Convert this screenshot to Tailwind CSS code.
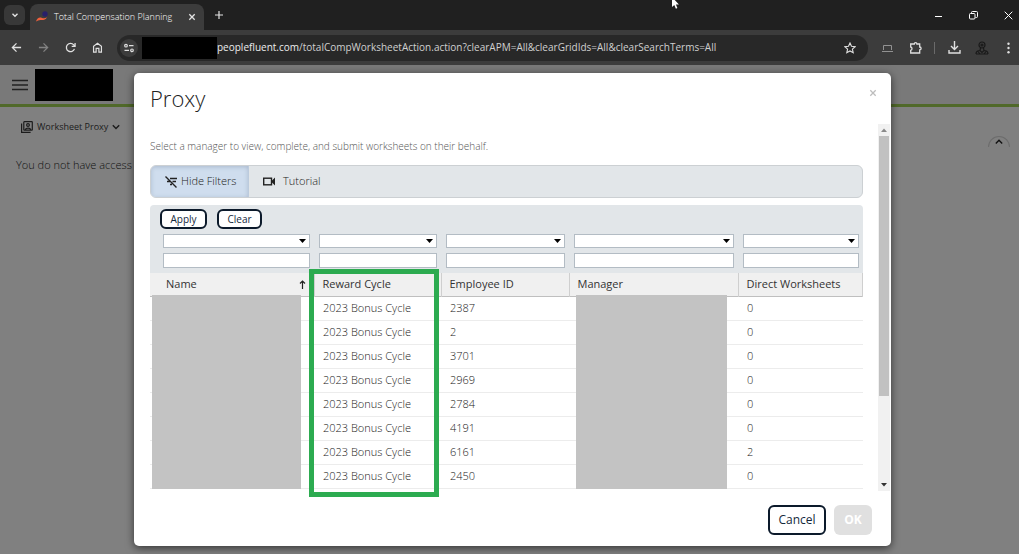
<!DOCTYPE html>
<html lang="en">
<head>
  <title>Total Compensation Planning</title>
  <meta charset="UTF-8">
  <meta name="viewport" content="width=device-width, initial-scale=1.0">
  <script src="https://cdn.jsdelivr.net/npm/@tailwindcss/browser@4"></script>
</head>
<body class="min-h-screen flex flex-col overflow-hidden bg-[#808080] font-['Open_Sans',sans-serif] text-[#333]">
  <!-- Tab strip -->
  <div class="relative flex h-[30px] items-end bg-[#202020] text-[#e3e3e3]">
    <button aria-label="Search tabs" class="mb-[5px] ml-1 flex h-5 w-[21px] items-center justify-center rounded-md bg-[#383838]">
      <svg class="h-2 w-2" viewBox="0 0 8 8" fill="none" stroke="currentColor" stroke-width="1.4"><path d="M1.5 2.800L4 5.300l2.500-2.500"/></svg>
    </button>
    <div class="ml-[5px] flex h-[26px] w-[174px] items-center rounded-t-lg bg-[#3c3c3c] pr-2 pl-[6px]">
      <svg class="h-3 w-3" viewBox="0 0 12 12"><circle cx="9" cy="3" r="2.700" fill="#27206b"/><path d="M0 10.500C1 7.500 3 6 5.500 6.800S9 7.500 11 6.200C9.500 9.500 6.500 9 4.500 9S1.500 9.800 0 10.500z" fill="#f0603c"/></svg>
      <span class="ml-[6px] flex-1 whitespace-nowrap text-[9px] font-light text-white">Total Compensation Planning</span>
      <button aria-label="Close tab"><svg class="h-2 w-2" viewBox="0 0 8 8" stroke="currentColor" stroke-width="1.300"><path d="M1.300 1.300l5.400 5.400M6.700 1.300L1.300 6.700"/></svg></button>
    </div>
    <button aria-label="New tab" class="mb-[11px] ml-[11px]"><svg class="h-2 w-2" viewBox="0 0 8 8" stroke="currentColor" stroke-width="1.200"><path d="M4 0v8M0 4h8"/></svg></button>
    <div class="mr-[6px] mb-[10px] ml-auto flex items-center gap-[26px] text-white">
      <button aria-label="Minimize"><svg class="h-[9px] w-[9px]" viewBox="0 0 9 9" stroke="currentColor"><path d="M1 5.500h7"/></svg></button>
      <button aria-label="Restore"><svg class="h-[9px] w-[9px]" viewBox="0 0 9 9" fill="none" stroke="currentColor"><rect x=".5" y="2.500" width="5.500" height="5.500" rx="1"/><path d="M2.500 2.500V1.500a1 1 0 011-1h4a1 1 0 011 1v4a1 1 0 01-1 1H6.500"/></svg></button>
      <button aria-label="Close"><svg class="h-[9px] w-[9px]" viewBox="0 0 9 9" stroke="currentColor"><path d="M.7.7l7.600 7.600M8.300.7L.7 8.300"/></svg></button>
    </div>
    <svg class="absolute -top-[3px] left-[671px] h-3 w-2" viewBox="0 0 8 12"><path d="M1 0v10l2.300-2 1.600 3.700 1.500-.7L4.900 7.500h3z" fill="#fff"/></svg>
  </div>

  <!-- Address bar -->
  <div class="flex h-[35px] items-center bg-[#3c3c3c] text-[#e0e0e0]">
    <button aria-label="Back" class="ml-[11px]"><svg class="h-[11px] w-[11px]" viewBox="0 0 12 12" fill="none" stroke="currentColor" stroke-width="1.400"><path d="M11 6H1.500M6 1.500L1.500 6 6 10.500"/></svg></button>
    <button aria-label="Forward" class="ml-4 text-[#828282]"><svg class="h-[11px] w-[11px]" viewBox="0 0 12 12" fill="none" stroke="currentColor" stroke-width="1.400"><path d="M1 6h9.500M6 1.500L10.500 6 6 10.500"/></svg></button>
    <button aria-label="Reload" class="ml-4"><svg class="h-[11px] w-[11px]" viewBox="0 0 12 12" fill="none" stroke="currentColor" stroke-width="1.400"><path d="M10.300 7.500A4.500 4.500 0 119.500 3.200L11 4.700M11 1v3.800H7.300"/></svg></button>
    <button aria-label="Home" class="ml-4"><svg class="h-[11px] w-[11px]" viewBox="0 0 12 12" fill="none" stroke="currentColor" stroke-width="1.300"><path d="M1.700 11V4.700L6 1.300l4.300 3.400V11H7.500V7h-3v4z"/></svg></button>
    <div class="ml-[14px] flex h-[26px] flex-1 items-center rounded-full bg-[#282828] pr-3 pl-[3px]">
      <button aria-label="Site information" class="flex h-[18px] w-[18px] items-center justify-center rounded-full bg-[#3c3c3c]">
        <svg class="h-[10px] w-[10px]" viewBox="0 0 10 10" fill="none" stroke="currentColor" stroke-width="1.200"><circle cx="2" cy="2.700" r="1.300"/><path d="M5 2.700h4.500M.5 7.300H5"/><circle cx="8" cy="7.300" r="1.300"/></svg>
      </button>
      <span class="ml-1 h-[22px] w-[75px] bg-black"></span>
      <span class="flex-1 whitespace-nowrap text-[10px] text-[#d0d0d0]"><span class="text-[#ededed]">peoplefluent.com</span>/totalCompWorksheetAction.action?clearAPM=All&amp;clearGridIds=All&amp;clearSearchTerms=All</span>
      <button aria-label="Bookmark"><svg class="h-3 w-3" viewBox="0 0 12 12" fill="none" stroke="currentColor" stroke-width="1.100"><path d="M6 1l1.500 3.300 3.600.4-2.700 2.400.8 3.600L6 8.900l-3.200 1.800.8-3.600L.9 4.700l3.600-.4z"/></svg></button>
    </div>
    <button aria-label="Device" class="ml-[14px] text-[#929292]"><svg class="h-[11px] w-[11px]" viewBox="0 0 11 11" fill="none" stroke="currentColor"><path d="M1.500 8V3.500h8V8M0 9.500h11"/></svg></button>
    <button aria-label="Extensions" class="ml-4"><svg class="h-[14px] w-[14px]" viewBox="0 0 14 14" fill="none" stroke="currentColor" stroke-width="1.300"><path d="M1.700 3H5.300a1.300 1.300 0 012.600 0H10.700V6a1.400 1.400 0 010 2.800V12H1.700V9.300a1.700 1.700 0 000-3.300z"/></svg></button>
    <span class="ml-[11px] h-3 w-px bg-[#6a6a6a]"></span>
    <button aria-label="Downloads" class="ml-[13px]"><svg class="h-[13px] w-[13px]" viewBox="0 0 13 13" fill="none" stroke="currentColor" stroke-width="1.400"><path d="M6.500 0v8M3 5l3.500 3.500L10 5M1 9v3h11V9"/></svg></button>
    <button aria-label="Profile" class="ml-[14px] text-[#191919]"><svg class="h-[14px] w-[14px]" viewBox="0 0 14 14" fill="none" stroke="currentColor" stroke-width="1.200"><circle cx="7" cy="4" r="3"/><circle cx="7" cy="4" r="1"/><path d="M5.500 7L5 9.500M8.500 7L9 9.500M1 13c0-2.500 2-3.500 4-3.500l2 2 2-2c2 0 4 1 4 3.500M3 10.500l2 2.500M11 10.500L9 13M1 13h12"/></svg></button>
    <button aria-label="Menu" class="mr-[9px] ml-[18px]"><svg class="h-3 w-[3px]" viewBox="0 0 3 12" fill="currentColor"><circle cx="1.500" cy="1.700" r="1.200"/><circle cx="1.500" cy="6" r="1.200"/><circle cx="1.500" cy="10.300" r="1.200"/></svg></button>
  </div>

  <!-- Page -->
  <div class="relative flex-1">
    <header class="flex h-[42px] items-center border-b-3 border-[#50692a] bg-[#797979] pl-3">
      <button aria-label="Open menu"><svg class="h-3 w-4" viewBox="0 0 16 12" stroke="#222" stroke-width="1.700"><path d="M0 1.500h16M0 6h16M0 10.500h16"/></svg></button>
      <span class="ml-[7px] h-8 w-[78px] bg-black"></span>
    </header>
    <div class="flex items-center pt-3 pl-[21px]">
      <button class="flex items-center text-[9px] leading-4 text-[#1c1c1c]">
        <svg class="mr-1 h-3 w-3" viewBox="0 0 12 12" fill="none" stroke="currentColor" stroke-width="1.200"><rect x="2.800" y=".7" width="8.500" height="8.500" rx=".5"/><path d="M.6 2.500v8.900h9M4.500 9c0-2.500 5-2.500 5 0"/><circle cx="7" cy="4" r="1.400"/></svg>
        Worksheet Proxy
        <svg class="ml-1 h-2 w-2" viewBox="0 0 8 8" fill="none" stroke="currentColor" stroke-width="1.500"><path d="M.8 2.300L4 5.500l3.200-3.200"/></svg>
      </button>
    </div>
    <p class="pt-[22px] pl-4 text-[11px] leading-4 font-light text-[#111]">You do not have access</p>
    <button aria-label="Collapse" class="absolute top-[71px] right-[9px] flex h-[11px] w-[22px] justify-center rounded-t-full border border-b-0 border-[#6c6c6c] pt-[2px]">
      <svg class="h-[6px] w-2" viewBox="0 0 8 6" fill="none" stroke="#111" stroke-width="1.400"><path d="M.8 4.500L4 1.300l3.200 3.200"/></svg>
    </button>

    <!-- Proxy dialog -->
    <div class="absolute inset-x-0 top-0 pt-2 pr-32 pl-[134px]">
      <div role="dialog" aria-labelledby="dialogTitle" class="rounded-[5px] bg-white pb-[11px] shadow-[0_2px_8px_rgba(0,0,0,0.6)]">
        <div class="flex h-[51px] items-start justify-between pr-[14px] pl-4">
          <h1 id="dialogTitle" class="pt-[9px] text-[22px] leading-8 font-light text-[#222]">Proxy</h1>
          <button aria-label="Close dialog" class="pt-4"><svg class="h-2 w-2" viewBox="0 0 8 8" stroke="#bdbdbd" stroke-width="1.300"><path d="M1.300 1.300l5.400 5.400M6.700 1.300L1.300 6.700"/></svg></button>
        </div>
        <div class="flex pr-px pl-4">
          <div class="min-w-0 flex-1 pt-[14px] pr-[15px] pb-[2px]">
            <p class="text-[10px] leading-4 font-light text-[#555]">Select a manager to view, complete, and submit worksheets on their behalf.</p>
            <div class="mt-[11px] flex h-[33px] overflow-hidden rounded-md border border-[#ccd0d3] bg-[#e2e6e9] text-[11px] font-light text-[#222]">
              <button class="flex w-[98px] items-center border-r border-[#bccbdd] bg-[#cfddee] pl-[14px] shadow-[inset_0_1px_4px_rgba(60,80,110,0.25)]">
                <svg class="mr-1 h-3 w-3" viewBox="0 0 12 12" fill="none" stroke="#222" stroke-width="1.400"><path d="M.5.5l11 11M5 2.500h7M2 5.500h3M7.500 5.500H11M5 8.500h2"/></svg>
                Hide Filters
              </button>
              <button class="flex items-center pl-[14px]">
                <svg class="mr-2 h-[9px] w-3" viewBox="0 0 12 9" fill="none" stroke="#222" stroke-width="1.400"><rect x=".7" y="1.200" width="7.800" height="6.600"/><path d="M9 4.500l2.500-2.500v5z" fill="#222"/></svg>
                Tutorial
              </button>
            </div>

            <div class="relative mt-[7px]">
              <div class="flex h-7 items-center gap-[10px] rounded-t-sm bg-[#e2e6e9] pl-[10px] text-[10px] font-medium text-[#14283c]">
                <button class="h-5 w-[47px] rounded-md border-2 border-[#0c1a2b] bg-white leading-4">Apply</button>
                <button class="h-5 w-[45px] rounded-md border-2 border-[#0c1a2b] bg-white leading-4">Clear</button>
              </div>
              <table class="w-full table-fixed border-collapse text-left text-[11px]">
                <colgroup>
                  <col class="w-[164px]">
                  <col class="w-[127px]">
                  <col class="w-[128px]">
                  <col class="w-[169px]">
                  <col>
                </colgroup>
                <thead>
                  <tr id="filters" class="h-10 bg-[#e2e6e9]"></tr>
                  <tr id="headings" class="h-[23px] border-b border-[#bfbfbf] bg-[#f0f0f0]"></tr>
                </thead>
                <tbody id="rows"></tbody>
              </table>
              <div class="absolute top-[90px] bottom-0 left-[2px] w-[149px] bg-[#c3c3c3]"></div>
              <div class="absolute top-[90px] bottom-0 left-[426px] w-[151px] bg-[#c3c3c3]"></div>
              <div class="absolute top-16 -bottom-2 left-[159px] w-[130px] border-5 border-[#2cab50]"></div>
            </div>
          </div>

          <!-- Scroll bar -->
          <div class="flex w-3 flex-col items-center bg-[#f1f1f1]">
            <svg class="my-1 h-1 w-[6px]" viewBox="0 0 6 4" fill="#8a8a8a"><path d="M0 4l3-3.500L6 4z"/></svg>
            <div class="h-[260px] w-[10px] bg-[#c1c1c1]"></div>
            <svg class="mt-auto mb-1 h-1 w-[6px]" viewBox="0 0 6 4" fill="#333"><path d="M0 0l3 3.500L6 0z"/></svg>
          </div>
        </div>
        <div class="flex justify-end gap-2 pt-[14px] pr-[19px] text-xs font-medium">
          <button class="h-[30px] w-[58px] rounded-md border-2 border-[#0c1a2b] text-[#14283c]">Cancel</button>
          <button disabled class="h-[30px] w-[38px] rounded-md bg-[#e0e0e0] font-bold text-white">OK</button>
        </div>
      </div>
    </div>
  </div>

  <script>
    const columns = ["Name", "Reward Cycle", "Employee ID", "Manager", "Direct Worksheets"];
    const rows = [
      ["2387", "0"], ["2", "0"], ["3701", "0"], ["2969", "0"],
      ["2784", "0"], ["4191", "0"], ["6161", "2"], ["2450", "0"]
    ];

    document.getElementById("filters").innerHTML = columns.map((name, i) => `
      <td class="p-0 align-top ${i === 0 ? "pl-[13px] pr-1" : "pl-[5px] pr-1"}">
        <div class="relative mt-px">
          <select aria-label="${name} condition" class="block h-[14px] w-full appearance-none border border-[#b3bcc4] bg-white"></select>
          <svg class="pointer-events-none absolute top-[5px] right-1 h-1 w-[7px]" viewBox="0 0 7 4"><path d="M0 0h7L3.500 4z"/></svg>
        </div>
        <input aria-label="${name} filter" class="mt-[5px] block h-[15px] w-full border border-[#b3bcc4] bg-white">
      </td>`).join("");

    document.getElementById("headings").innerHTML = columns.map((name, i) => `
      <th class="border-r border-[#cfcfcf] py-0 font-medium whitespace-nowrap ${i === 0 ? "pl-4" : "pl-2"}">
        <span class="flex items-center justify-between">${name}${i === 0 ? `<svg class="mr-2 h-[9px] w-[7px]" viewBox="0 0 7 9" fill="none" stroke="#222" stroke-width="1.200"><path d="M3.500 9V1M1 3.500L3.500 1 6 3.500"/></svg>` : ""}</span>
      </th>`).join("");

    document.getElementById("rows").innerHTML = rows.map(([id, count]) => `
      <tr class="h-6 border-b border-[#ececec] font-light text-[#222]">
        <td class="p-0"></td>
        <td class="py-0 pl-[9px]">2023 Bonus Cycle</td>
        <td class="py-0 pl-[9px]">${id}</td>
        <td class="p-0"></td>
        <td class="py-0 pl-[9px]">${count}</td>
      </tr>`).join("");
  </script>
</body>
</html>
